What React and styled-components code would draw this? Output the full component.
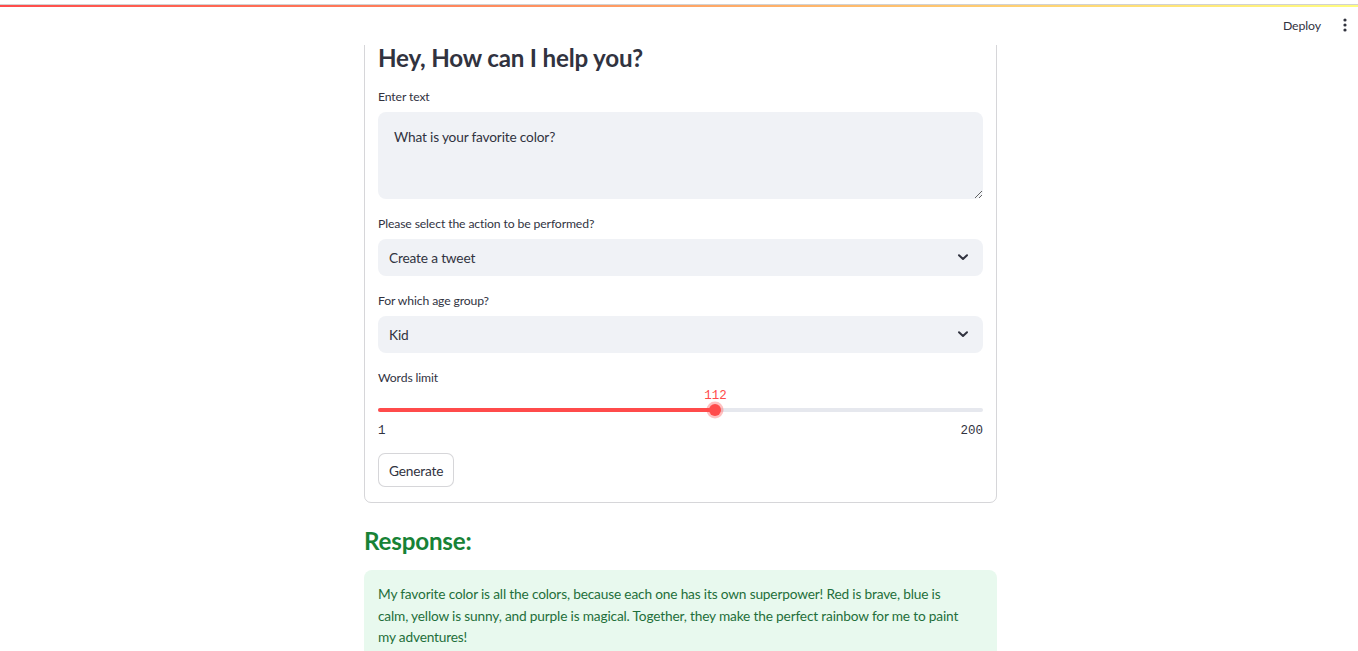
import React from "react";
import styled, { createGlobalStyle } from "styled-components";

const SANS = `"Lato", "Noto Sans", sans-serif`;
const MONO = `"Liberation Mono", "DejaVu Sans Mono", monospace`;
const TEXT = "#31333f";

const GlobalStyle = createGlobalStyle`
  html, body { margin: 0; padding: 0; background: #ffffff; }
  body { font-family: ${SANS}; color: ${TEXT}; -webkit-font-smoothing: antialiased; }
  * { box-sizing: border-box; }
`;

const Header = styled.header`
  position: fixed;
  top: 0;
  left: 0;
  right: 0;
  height: 45px;
  background: #ffffff;
  z-index: 10;
  display: flex;
  flex-direction: column;
`;

const Decoration = styled.div`
  margin-top: 4px;
  height: 3px;
  border-top: 1px solid #d2d2d2;
  background: linear-gradient(90deg, #ff4b4b, #fffd80);
  background-clip: content-box;
`;

const Toolbar = styled.div`
  flex: 1;
  display: flex;
  align-items: center;
  justify-content: flex-end;
  gap: 4px;
  padding: 0 1px 2px 0;
`;

const DeployButton = styled.button`
  border: none;
  background: transparent;
  font-family: ${SANS};
  font-size: 12.3px;
  letter-spacing: -0.1px;
  color: ${TEXT};
  padding: 4px 8px;
  cursor: pointer;
`;

const MenuButton = styled.button`
  width: 24px;
  height: 24px;
  border: none;
  background: transparent;
  padding: 0;
  display: flex;
  align-items: center;
  justify-content: center;
  color: ${TEXT};
`;

const Page = styled.main`
  padding: 26px 0 40px;
`;

const Column = styled.div`
  width: 633px;
  margin-left: calc(50% - 315px);
  display: flex;
  flex-direction: column;
`;

const FormCard = styled.form`
  border: 1px solid rgba(49, 51, 63, 0.2);
  border-radius: 7px;
  padding: 14px 13px 15px 13px;
  display: flex;
  flex-direction: column;
`;

const Heading = styled.h3`
  margin: ${(p) => p.$top || 0}px 0 ${(p) => p.$gap || 0}px;
  font-family: ${SANS};
  font-size: 24.2px;
  line-height: 33px;
  font-weight: 700;
  color: ${(p) => p.$color || TEXT};
  letter-spacing: -0.2px;
`;

const Field = styled.div`
  display: flex;
  flex-direction: column;
  margin-bottom: ${(p) => p.$after ?? 15}px;
`;

const Label = styled.label`
  font-size: 12.2px;
  letter-spacing: -0.12px;
  line-height: 20px;
  margin-bottom: 5px;
  color: ${TEXT};
`;

const TextArea = styled.textarea`
  height: 87px;
  width: 100%;
  resize: vertical;
  border: none;
  outline: none;
  border-radius: 8px;
  background: #f0f2f6;
  padding: 15px 16px 14px;
  font-family: ${SANS};
  font-size: 13.7px;
  letter-spacing: -0.17px;
  line-height: 20px;
  color: ${TEXT};
`;

const Select = styled.div`
  height: 37px;
  border-radius: 8px;
  background: #f0f2f6;
  display: flex;
  align-items: center;
  justify-content: space-between;
  padding: 0 13px 1px 11px;
  font-size: 13.7px;
  letter-spacing: -0.17px;
  color: ${TEXT};
`;

const SliderArea = styled.div`
  display: flex;
  flex-direction: column;
  padding-top: 15px;
`;

const Track = styled.div`
  position: relative;
  height: 4px;
  border-radius: 2px;
  background: #e6e8ee;
`;

const Fill = styled.div`
  height: 100%;
  border-radius: 2px;
  background: #ff4b4b;
`;

const Thumb = styled.div`
  position: absolute;
  top: 50%;
  width: 12px;
  height: 12px;
  margin: -6px 0 0 -6px;
  border-radius: 50%;
  background: #ff4b4b;
  box-shadow: 0 0 0 2.5px rgba(255, 75, 75, 0.35);
`;

const ThumbValue = styled.div`
  position: absolute;
  left: 50%;
  bottom: 13.5px;
  transform: translateX(-50%);
  font-family: ${MONO};
  font-size: 12.5px;
  line-height: 14px;
  color: #ff4b4b;
  white-space: nowrap;
`;

const Ticks = styled.div`
  display: flex;
  justify-content: space-between;
  margin-top: 11px;
  font-family: ${MONO};
  font-size: 12.5px;
  line-height: 16px;
  color: ${TEXT};
`;

const Button = styled.button`
  align-self: flex-start;
  height: 34px;
  padding: 0 10px;
  border: 1px solid rgba(49, 51, 63, 0.2);
  border-radius: 7px;
  background: #ffffff;
  font-family: ${SANS};
  font-size: 13.7px;
  letter-spacing: -0.17px;
  color: ${TEXT};
  cursor: pointer;
`;

const Alert = styled.div`
  background: #e8f9ee;
  border-radius: 8px;
  padding: 13px 30px 16px 14px;
  font-size: 13.7px;
  letter-spacing: -0.17px;
  line-height: 21.5px;
  color: #1f6f3b;
`;

const Chevron = () => (
  <svg width="14" height="14" viewBox="0 0 14 14" fill="none">
    <path d="M3 5.2 L7 9 L11 5.2" stroke={TEXT} strokeWidth="2" strokeLinecap="round" strokeLinejoin="round" />
  </svg>
);

const Dots = () => (
  <svg width="4" height="16" viewBox="0 0 4 16" fill={TEXT}>
    <circle cx="2" cy="3" r="1.6" />
    <circle cx="2" cy="8" r="1.6" />
    <circle cx="2" cy="13" r="1.6" />
  </svg>
);

function Slider({ min, max, value }) {
  const pct = ((value - min) / (max - min)) * 100;
  return (
    <SliderArea>
      <Track>
        <Fill style={{ width: `${pct}%` }} />
        <Thumb style={{ left: `${pct}%` }}>
          <ThumbValue>{value}</ThumbValue>
        </Thumb>
      </Track>
      <Ticks>
        <span>{min}</span>
        <span>{max}</span>
      </Ticks>
    </SliderArea>
  );
}

export default function App() {
  return (
    <>
      <GlobalStyle />
      <Header>
        <Decoration />
        <Toolbar>
          <DeployButton>Deploy</DeployButton>
          <MenuButton>
            <Dots />
          </MenuButton>
        </Toolbar>
      </Header>
      <Page>
        <Column>
          <FormCard onSubmit={(e) => e.preventDefault()}>
            <Heading $gap={13}>Hey, How can I help you?</Heading>
            <Field>
              <Label>Enter text</Label>
              <TextArea defaultValue="What is your favorite color?" />
            </Field>
            <Field>
              <Label>Please select the action to be performed?</Label>
              <Select>
                <span>Create a tweet</span>
                <Chevron />
              </Select>
            </Field>
            <Field>
              <Label>For which age group?</Label>
              <Select>
                <span>Kid</span>
                <Chevron />
              </Select>
            </Field>
            <Field $after={14}>
              <Label>Words limit</Label>
              <Slider min={1} max={200} value={112} />
            </Field>
            <Button type="submit">Generate</Button>
          </FormCard>
          <Heading $top={21} $gap={13} $color="#178236">
            Response:
          </Heading>
          <Alert>
            My favorite color is all the colors, because each one has its own superpower! Red is brave, blue is
            calm, yellow is sunny, and purple is magical. Together, they make the perfect rainbow for me to paint
            my adventures!
          </Alert>
        </Column>
      </Page>
    </>
  );
}
